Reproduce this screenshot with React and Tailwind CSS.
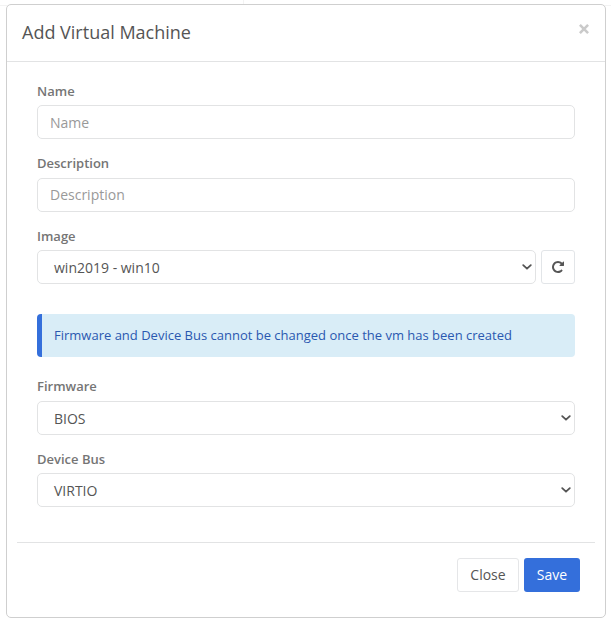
import React from "react";

function Chevron() {
  return (
    <svg className="h-[6px] w-[10px] shrink-0" viewBox="0 0 10 6" fill="none" stroke="#555" strokeWidth="1.8" strokeLinecap="round" strokeLinejoin="round">
      <path d="M1.2 1.1 5 4.7 8.8 1.1" />
    </svg>
  );
}

function RepeatIcon() {
  return (
    <svg className="mb-px h-3 w-3" viewBox="0 0 1536 1536" fill="#555">
      <path d="M1536 128v448q0 26-19 45t-45 19h-448q-42 0-59-40-17-39 14-69l138-138q-148-137-349-137-104 0-198.500 40.500t-163.500 109.500-109.500 163.500-40.500 198.500 40.500 198.500 109.500 163.500 163.500 109.500 198.500 40.500q119 0 225-52t179-147q7-10 23-12 15 0 25 9l137 138q9 8 9.500 20.500t-7.500 22.500q-109 132-264 204.500t-327 72.500q-156 0-298-61t-245-164-164-245-61-298 61-298 164-245 245-164 298-61q147 0 284.500 55.500t244.500 156.500l130-129q29-31 70-14 39 17 39 59z" />
    </svg>
  );
}

function Label({ children }) {
  return <div className="h-[18px] text-[13px] leading-[18px] font-semibold text-[#757575]">{children}</div>;
}

function TextField({ placeholder, className = "pt-px" }) {
  return (
    <input
      placeholder={placeholder}
      className={`block h-[34px] w-full rounded-[5px] border border-[#e2e3e4] bg-white px-3 text-[14px] text-[#555] placeholder:text-[#999] ${className}`}
    />
  );
}

function SelectField({ value }) {
  return (
    <div className="flex h-[34px] flex-1 items-center justify-between rounded-[5px] border border-[#e2e3e4] bg-white pr-[3px] pl-4 text-[14px] leading-5 text-[#555]">
      <span className="pt-[2px]">{value}</span>
      <Chevron />
    </div>
  );
}

export default function App() {
  return (
    <div className="h-[623px] w-[611px] overflow-hidden bg-white bg-[linear-gradient(#f3f3f3,#f3f3f3),linear-gradient(#f3f3f3,#f3f3f3)] bg-[length:100%_1px,1px_4px] bg-[position:0_5px,243px_0] bg-no-repeat pt-1 pl-1.5 font-['Open_Sans',sans-serif]">
      <div className="flex h-[614px] w-[600px] flex-col rounded-[5px] border border-[#cfcfcf] bg-white">
        <div className="flex h-[57px] shrink-0 items-center justify-between border-b border-[#e2e3e4] pr-4 pl-[15px]">
          <h4 className="pb-[2px] text-[18px] leading-6 text-[#555]">Add Virtual Machine</h4>
          <svg className="mb-2 h-[10px] w-[10px]" viewBox="0 0 10 10" stroke="#cacaca" strokeWidth="2.6">
            <path d="M.9.9l8.200 8.200M9.100.9.9 9.100" />
          </svg>
        </div>

        <div className="flex flex-col px-[30px] pt-5">
          <Label>Name</Label>
          <div className="mt-[5px]"><TextField placeholder="Name" /></div>
          <div className="mt-[15px]"><Label>Description</Label></div>
          <div className="mt-[6px]"><TextField placeholder="Description" className="pb-px" /></div>
          <div className="mt-[15px]"><Label>Image</Label></div>
          <div className="mt-[5px] flex gap-[5px]">
            <SelectField value="win2019 - win10" />
            <button className="flex h-[34px] w-[34px] items-center justify-center rounded-[3px] border border-[#e2e5e8]">
              <RepeatIcon />
            </button>
          </div>

          <div className="mt-[30px] flex h-[43px] items-center rounded-[4px] border-l-[5px] border-[#346fdb] bg-[#d9edf7] pl-3 text-[13px] text-[#2a58b0]">
            Firmware and Device Bus cannot be changed once the vm has been created
          </div>

          <div className="mt-5"><Label>Firmware</Label></div>
          <div className="mt-[6px] flex"><SelectField value="BIOS" /></div>
          <div className="mt-[15px]"><Label>Device Bus</Label></div>
          <div className="mt-[5px] flex"><SelectField value="VIRTIO" /></div>
        </div>

        <div className="mx-[10px] mt-[35px] flex justify-end gap-[5px] border-t border-[#e2e3e4] pt-[15px] pr-[15px]">
          <button className="h-[34px] w-[62px] rounded-[3px] border border-[#e5e6e8] bg-white text-[14px] leading-5 text-[#555]">Close</button>
          <button className="h-[34px] w-[56px] rounded-[3px] bg-[#346fdb] text-[14px] leading-5 text-white">Save</button>
        </div>
      </div>
    </div>
  );
}
